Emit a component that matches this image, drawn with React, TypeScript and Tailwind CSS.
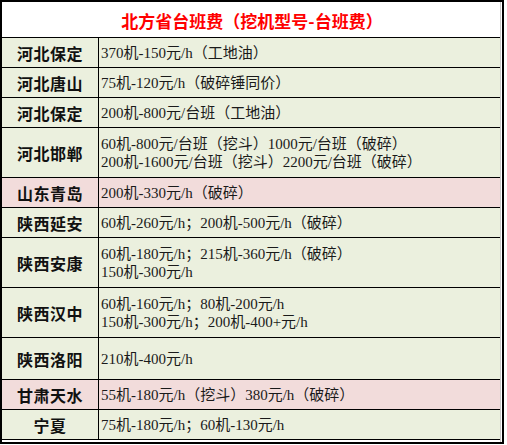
const rows: { name: string; lines: string[]; h: string; pink?: boolean }[] = [
  { name: '河北保定', lines: ['370机-150元/h（工地油）'], h: 'h-[30px]' },
  { name: '河北唐山', lines: ['75机-120元/h（破碎锤同价）'], h: 'h-[30px]' },
  { name: '河北保定', lines: ['200机-800元/台班（工地油）'], h: 'h-[30px]' },
  {
    name: '河北邯郸',
    lines: ['60机-800元/台班（挖斗）1000元/台班（破碎）', '200机-1600元/台班（挖斗）2200元/台班（破碎）'],
    h: 'h-[50px]',
  },
  { name: '山东青岛', lines: ['200机-330元/h（破碎）'], h: 'h-[30px]', pink: true },
  { name: '陕西延安', lines: ['60机-260元/h；200机-500元/h（破碎）'], h: 'h-[30px]' },
  { name: '陕西安康', lines: ['60机-180元/h；215机-360元/h（破碎）', '150机-300元/h'], h: 'h-[50px]' },
  { name: '陕西汉中', lines: ['60机-160元/h；80机-200元/h', '150机-300元/h；200机-400+元/h'], h: 'h-[50px]' },
  { name: '陕西洛阳', lines: ['210机-400元/h'], h: 'h-[42px]' },
  { name: '甘肃天水', lines: ['55机-180元/h（挖斗）380元/h（破碎）'], h: 'h-[30px]', pink: true },
  { name: '宁夏', lines: ['75机-180元/h；60机-130元/h'], h: 'h-[30px]' },
];

export default function App() {
  return (
    <div className="w-[504px] h-[444px] border-2 border-black bg-white">
      <div className="w-[499px] border-r border-[#c8c8c8] h-full">
        <div className="h-[35px] flex items-center justify-center pl-[2px] pt-[2px]">
          <span
            className="text-[17px] font-bold text-[#ff0000]"
            style={{ fontFamily: '"Noto Sans CJK SC", sans-serif' }}
          >
            北方省台班费（挖机型号-台班费）
          </span>
        </div>
        {rows.map((r, i) => (
          <div
            key={i}
            className={`grid grid-cols-[97px_1fr] border-t border-black ${r.h} ${
              r.pink ? 'bg-[#f2dcdb]' : 'bg-[#ebf0de]'
            }`}
          >
            <div
              className="flex items-center justify-center border-r border-black text-[16px] font-bold text-[#111] tracking-[0.5px]"
              style={{ fontFamily: '"Noto Sans CJK SC", sans-serif' }}
            >
              {r.name}
            </div>
            <div
              className="flex flex-col justify-center pl-[2px] text-[15px] leading-[18px] text-[#1a1a1a]"
              style={{ fontFamily: '"Liberation Serif", "Noto Sans CJK SC", serif' }}
            >
              {r.lines.map((l, j) => (
                <div key={j} className="whitespace-nowrap">
                  {l}
                </div>
              ))}
            </div>
          </div>
        ))}
        <div className="border-t border-black" />
      </div>
    </div>
  );
}
